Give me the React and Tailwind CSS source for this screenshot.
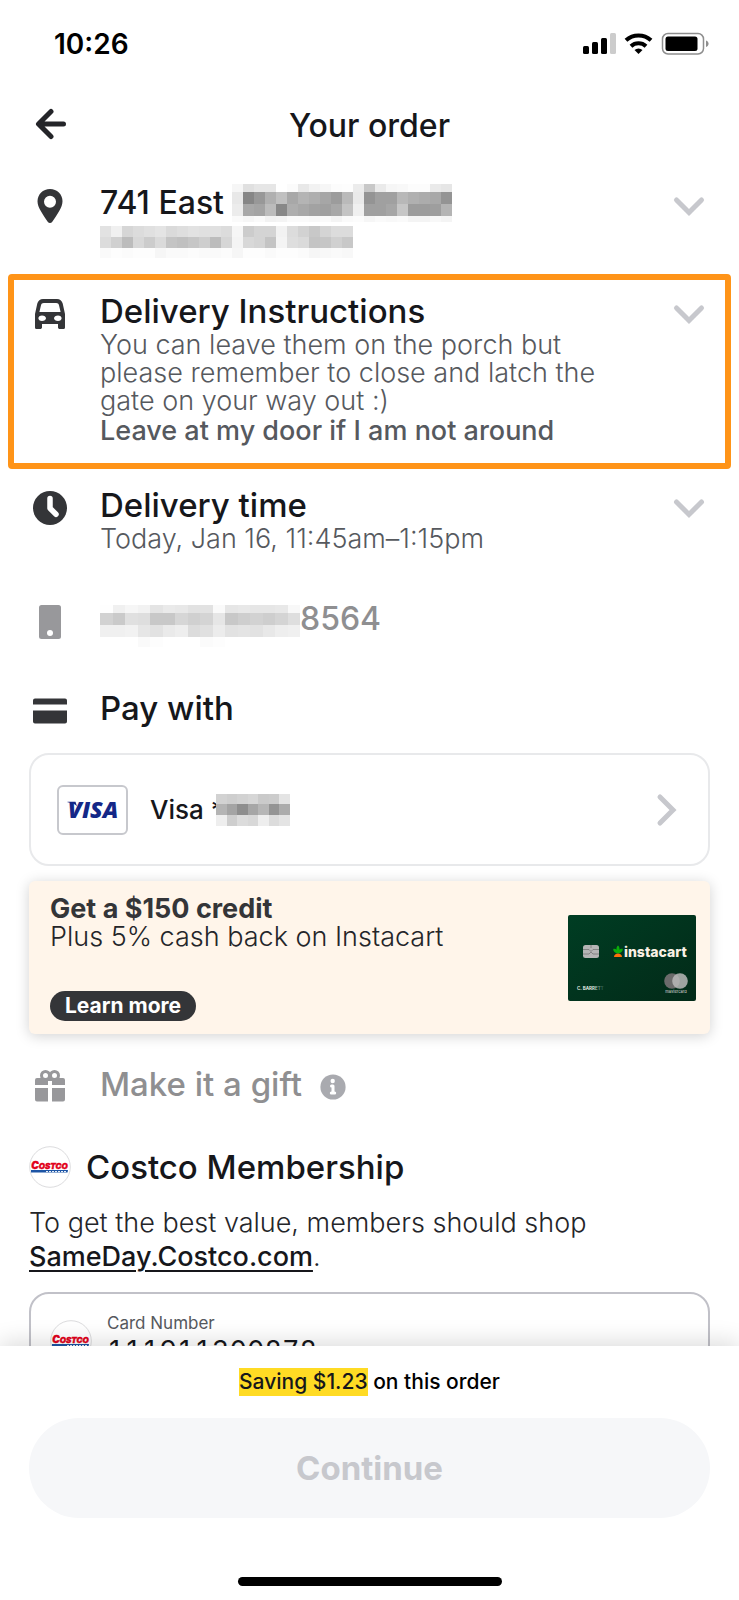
import React from "react";

// Grey levels of the masked out texts, one string per row, two hex digits per cell
const MASKS = {
  street: {
    cell: 11,
    rows: [
      [8, "f6 e0 e6 e6 ff fb e8 f2 f6 fc fd ec c8 ea f6 f8 fc fc ea e6"],
      [12, "e8 86 98 b0 c0 a8 b4 ae a6 9c ba ea 94 a0 a0 b8 b0 ac a8 94"],
      [12, "ec a8 a4 bc 88 ae a8 a2 a0 a8 c4 f0 a0 a0 a6 c6 9c 9c 9e b4"],
      [6, "fa f6 fa f2 f4 fa fa f8 fa f4 fa fc f6 fa f8 fa f4 f4 f8 f4"],
    ],
  },
  city: {
    cell: 11,
    rows: [
      [11, "e2 f0 d6 dc e0 e4 da de e2 e0 e0 dc f6 cc d4 d4 f2 dc d2 c8 d4 dc dc"],
      [11, "dc d0 bc d8 cc da c4 c0 c6 ce bc d6 f4 d8 d4 c4 f4 de da c4 c6 d0 c8"],
      [10, "fa fd fb fd fd f6 fa fa fc fa fa fc f6 fd fd fa fd fd fb f6 f8 fa f8"],
    ],
  },
  phone: {
    cell: 12.5,
    rows: [
      [8, "fe f0 f6 f2 e4 ea e8 e2 e2 fa e6 e8 e6 e6 e8 f8"],
      [12, "d2 ca e0 de c8 c8 d6 d0 d4 e6 c8 ce d2 ce d4 de"],
      [12, "f0 f0 f2 e6 e2 ea ee dc e0 ec e2 e4 e2 e8 ee f0"],
      [10, "ff ff ff fa fd ff ff ff fb fd ff ff ff ff ff ff"],
    ],
  },
  card: {
    cell: 10.5,
    rows: [
      [10, "d2 ce d2 d6 ca cc e4"],
      [11, "b4 a4 8e a6 b6 94 ac"],
      [11, "ee ce dc d8 ee dc e4"],
    ],
  },
};

const Mask = ({ name }) => {
  const { cell, rows } = MASKS[name];
  const height = rows.reduce((sum, [h]) => sum + h, 0);
  const width = rows[0][1].split(" ").length * cell;
  let y = 0;

  return (
    <svg
      width={width}
      height={height}
      shapeRendering="crispEdges"
      className="shrink-0"
      aria-hidden="true"
    >
      {rows.map(([h, values]) => {
        const top = y;
        y += h;
        return values
          .split(" ")
          .map((v, i) => (
            <rect
              key={`${top}-${i}`}
              x={i * cell}
              y={top}
              width={cell}
              height={h}
              fill={`#${v}${v}${v}`}
            />
          ));
      })}
    </svg>
  );
};

const PinIcon = () => (
  <svg width="36" height="36" viewBox="0 0 36 36" fill="#343538">
    <path
      fillRule="evenodd"
      d="M18 1C11 1 5.500 6.400 5.500 13.300c0 3.200 1.300 6.200 3 9.200 2.300 4.200 5 8.200 7.200 11.200 1.200 1.700 3.400 1.700 4.600 0 2.200-3 4.900-7 7.200-11.200 1.700-3 3-6 3-9.200C30.500 6.400 25 1 18 1Zm0 18.800a6 6 0 1 0 0-12 6 6 0 0 0 0 12Z"
    />
  </svg>
);

const CarIcon = () => (
  <svg width="36" height="36" viewBox="0 0 36 36" fill="#343538">
    <path
      fillRule="evenodd"
      d="M11 3h14c2.800 0 5 1.800 5.700 4.500L33 18v13.500c0 1-.8 1.500-1.800 1.500h-3.400c-1 0-1.800-.6-1.800-1.500V28H10v3.500c0 .9-.8 1.500-1.800 1.500H4.800C3.800 33 3 32.500 3 31.500V18L5.300 7.500C6 4.800 8.200 3 11 3Zm.8 4c-1.500 0-2.500.8-2.800 2.200L7.400 16h21.200L27 9.200C26.700 7.800 25.700 7 24.200 7H11.800ZM10 25c2.200 0 4-1.200 4-2.700S12.200 19.600 10 19.600s-3.600 1.200-3.600 2.700S7.800 25 10 25Zm16 0c2.200 0 3.600-1.200 3.600-2.700s-1.400-2.700-3.600-2.700-4 1.200-4 2.700 1.800 2.700 4 2.700Z"
    />
  </svg>
);

const ClockIcon = () => (
  <svg width="36" height="36" viewBox="0 0 36 36">
    <circle cx="18" cy="18" r="17" fill="#343538" />
    <path
      d="M18 8.500v9.800l6 6"
      fill="none"
      stroke="#fff"
      strokeWidth="5.500"
      strokeLinecap="round"
      strokeLinejoin="round"
    />
  </svg>
);

const PhoneIcon = () => (
  <svg width="36" height="36" viewBox="0 0 36 36">
    <rect x="7" y="1" width="22" height="34" rx="2.500" fill="#98989b" />
    <circle cx="18" cy="29" r="3" fill="#fff" />
  </svg>
);

const CardIcon = () => (
  <svg width="36" height="36" viewBox="0 0 36 36" fill="#343538">
    <path d="M3 5.500h30a2 2 0 0 1 2 2v4H1v-4a2 2 0 0 1 2-2ZM1 17.500h34V28.500a2 2 0 0 1-2 2H3a2 2 0 0 1-2-2Z" />
  </svg>
);

const GiftIcon = () => (
  <svg width="36" height="36" viewBox="0 0 36 36" fill="#98989b">
    <g fill="none" stroke="#98989b" strokeWidth="3">
      <circle cx="13.500" cy="6.500" r="4" />
      <circle cx="22.500" cy="6.500" r="4" />
    </g>
    <path d="M5 9h26a2 2 0 0 1 2 2v5H20v-4h-4v4H3v-5a2 2 0 0 1 2-2ZM3 19h13v13.500H5a2 2 0 0 1-2-2ZM20 19h13v11.500a2 2 0 0 1-2 2H20Z" />
  </svg>
);

const InfoIcon = () => (
  <svg width="26" height="26" viewBox="0 0 26 26">
    <circle cx="13" cy="13" r="12.600" fill="#a9aaaf" />
    <circle cx="12.700" cy="7" r="2.200" fill="#fff" />
    <path
      d="M11.500 12h1.500v6.500M11.300 19h3.400"
      fill="none"
      stroke="#fff"
      strokeWidth="3"
      strokeLinecap="round"
      strokeLinejoin="round"
    />
  </svg>
);

const ChevronDown = () => (
  <svg width="42" height="36" viewBox="0 0 42 36" fill="none">
    <path
      d="m8.500 12 12.500 12.500L33.500 12"
      stroke="#c7c8cd"
      strokeWidth="5"
      strokeLinecap="round"
    />
  </svg>
);

const CostcoLogo = () => (
  <svg
    width="42"
    height="42"
    viewBox="0 0 42 42"
    className="shrink-0"
    aria-hidden="true"
  >
    <circle cx="21" cy="21" r="20.300" fill="#fff" stroke="#dcdcde" />
    <text
      x="20.500"
      y="22.500"
      textAnchor="middle"
      fontFamily="Inter, sans-serif"
      fontWeight="900"
      fontStyle="italic"
      fontSize="8"
      fill="#e2001a"
      stroke="#e2001a"
      strokeWidth="0.400"
    >
      <tspan fontSize="10">C</tspan>OSTCO
    </text>
    <path d="M2 24h37l-.5 2.400H2Z" fill="#1d55a5" />
    <path d="M17 25.600h21" stroke="#fff" strokeWidth="1" strokeDasharray="2 1" />
  </svg>
);

const InstacartCard = () => (
  <svg
    width="128"
    height="86"
    viewBox="0 0 128 86"
    className="shrink-0"
    aria-hidden="true"
  >
    <defs>
      <linearGradient id="cardGreen" x1="0" y1="0" x2="1" y2="1">
        <stop offset="0" stopColor="#003d23" />
        <stop offset="1" stopColor="#022a18" />
      </linearGradient>
      <linearGradient id="nameFade" x1="0" y1="0" x2="1" y2="0">
        <stop offset="0.600" stopColor="#e8efe9" />
        <stop offset="1" stopColor="#1c4a34" />
      </linearGradient>
    </defs>
    <rect width="128" height="86" rx="2" fill="url(#cardGreen)" />
    <rect x="15" y="30" width="16" height="13" rx="2.500" fill="#b5b5b5" />
    <path
      d="M15 34.500h6l2 2 2-2h6M15 39h6l2-2 2 2h6M23 30v3"
      fill="none"
      stroke="#777"
      strokeWidth="0.800"
    />
    <path
      d="M50 38.500c-3-.2-4.800-2-4.800-4.500 1.500-.4 2.600 0 3.300.7-.2-1.800.3-3.200 1.500-4.200 1.200 1 1.700 2.400 1.500 4.200.7-.7 1.800-1.100 3.300-.7 0 2.500-1.800 4.300-4.800 4.500Z"
      fill="#0aad0a"
    />
    <path d="M46 42c0-2 1.800-3.500 4-3.500s4 1.500 4 3.500Z" fill="#ff7009" />
    <text
      x="56"
      y="42"
      fontFamily="Inter, sans-serif"
      fontWeight="800"
      fontSize="14"
      fill="#faf1e5"
    >
      instacart
    </text>
    <text
      x="9"
      y="75"
      fontFamily="Inter, sans-serif"
      fontWeight="700"
      fontSize="4.500"
      fill="url(#nameFade)"
    >
      C. BARRETT
    </text>
    <circle cx="104" cy="66" r="7.800" fill="#6b6b6b" />
    <circle cx="112" cy="66" r="7.800" fill="#b9b9b9" fillOpacity="0.850" />
    <text
      x="108"
      y="77.500"
      textAnchor="middle"
      fontFamily="Inter, sans-serif"
      fontSize="4"
      fill="#dcdcdc"
    >
      mastercard
    </text>
  </svg>
);

const StatusBar = () => (
  <div className="flex items-center justify-between pt-[27px] pl-[54px] pr-[30px] text-black">
    <span className="text-[28px] leading-[34px] font-semibold">10:26</span>
    <svg width="126" height="24" viewBox="0 0 126 24" aria-hidden="true">
      <rect x="0" y="14" width="6" height="8" rx="1.500" />
      <rect x="9" y="10" width="6" height="12" rx="1.500" />
      <rect x="18" y="6" width="6" height="16" rx="1.500" />
      <rect x="27" y="1" width="6" height="21" rx="1.500" fill="#cccccc" />
      <g fill="none" stroke="#000" strokeWidth="4">
        <path d="M43 8.300a18.500 18.500 0 0 1 25 0" />
        <path d="M48 14.200a11 11 0 0 1 15 0" />
      </g>
      <path d="m55.500 22-4-4a6 6 0 0 1 8 0Z" />
      <rect
        x="79.500"
        y="1.500"
        width="41"
        height="20.500"
        rx="5.500"
        fill="none"
        stroke="#8e8e8e"
        strokeWidth="1.500"
      />
      <rect x="82.500" y="4.500" width="32" height="14.500" rx="2.500" />
      <path d="M123 8.500c1.500.6 2.600 1.700 2.600 3.300s-1.100 2.700-2.600 3.300Z" fill="#8e8e8e" />
    </svg>
  </div>
);

const Row = ({ icon, expandLabel, children }) => (
  <div className="flex items-start">
    <span className="w-[42px] flex justify-center shrink-0 mt-[3px] mr-[29px]">
      {icon}
    </span>
    <div className="flex-1 min-w-0">{children}</div>
    {expandLabel && (
      <button type="button" aria-label={expandLabel} className="shrink-0 mt-[3px]">
        <ChevronDown />
      </button>
    )}
  </div>
);

const App = () => {
  return (
    <div className="h-screen flex flex-col bg-white font-['Inter',sans-serif] text-[#16171b] overflow-hidden">
      <main className="flex-1 min-h-0 overflow-hidden">
        <StatusBar />

        <header className="mt-[47px] px-[29px] h-9 grid grid-cols-[42px_1fr_42px] items-center">
          <button type="button" aria-label="Back">
            <svg width="42" height="36" viewBox="0 0 42 36" fill="none">
              <path
                d="M34.500 16H10M22 3.500 9.500 16 22 28.500"
                stroke="#242529"
                strokeWidth="5"
                strokeLinecap="round"
                strokeLinejoin="round"
              />
            </svg>
          </button>
          <h1 className="text-center text-[32px] leading-9 font-medium">
            Your order
          </h1>
        </header>

        {/* Address */}
        <section className="mt-[41px] px-[29px]">
          <Row icon={<PinIcon />} expandLabel="Change address">
            <h2 className="h-9 text-[32px] leading-9 font-medium flex items-center gap-2">
              741 East <Mask name="street" />
            </h2>
            <div className="mt-[5px]">
              <Mask name="city" />
            </div>
          </Row>
        </section>

        {/* Delivery instructions */}
        <section className="mt-4 mx-2 px-[15px] pt-[13px] pb-[18px] border-[6px] border-[#ff9418] rounded-[4px]">
          <Row icon={<CarIcon />} expandLabel="Edit delivery instructions">
            <h2 className="text-[33px] leading-9 font-medium">
              Delivery Instructions
            </h2>
            <p className="mt-0.5 pr-10 text-[27px] leading-7 font-light text-[#56595e]">
              You can leave them on the porch but please remember to close and
              latch the gate on your way out :)
            </p>
            <p className="mt-0.5 text-[27px] leading-7 font-medium text-[#56595e]">
              Leave at my door if I am not around
            </p>
          </Row>
        </section>

        <div className="px-[29px]">
          {/* Delivery time */}
          <section className="mt-[18px]">
            <Row icon={<ClockIcon />} expandLabel="Change delivery time">
              <h2 className="text-[33px] leading-9 font-medium">
                Delivery time
              </h2>
              <p className="mt-0.5 text-[27px] leading-7 font-light text-[#56595e]">
                Today, Jan 16, 11:45am–1:15pm
              </p>
            </Row>
          </section>

          {/* Phone */}
          <section className="mt-12">
            <Row icon={<PhoneIcon />}>
              <p className="h-9 flex items-start text-[32px] leading-9 font-medium text-[#8f8f91]">
                <span className="mt-1 shrink-0">
                  <Mask name="phone" />
                </span>
                8564
              </p>
            </Row>
          </section>

          {/* Payment */}
          <section className="mt-[50px]">
            <Row icon={<CardIcon />}>
              <h2 className="text-[33px] leading-9 font-medium">Pay with</h2>
            </Row>
            <button
              type="button"
              className="mt-6 w-full h-[113px] px-[26px] flex items-center rounded-[20px] border-2 border-[#e8e9eb] text-left"
            >
              <span className="w-[71px] h-[50px] flex items-center justify-center rounded-[6px] border-2 border-[#c7c8cd]">
                <svg width="60" height="34" viewBox="0 0 60 34" aria-hidden="true">
                  <text
                    x="30"
                    y="25"
                    textAnchor="middle"
                    fontFamily="Open Sans, sans-serif"
                    fontWeight="800"
                    fontStyle="italic"
                    fontSize="23"
                    fill="#142787"
                  >
                    VISA
                  </text>
                  <path d="M4.500 8.700h8l1.500 4.500c-2-2.200-5.500-3.600-9.500-4Z" fill="#142787" />
                </svg>
              </span>
              <span className="ml-[22px] text-[26px] leading-8 font-medium">
                Visa *
              </span>
              <span className="relative -ml-2">
                <Mask name="card" />
              </span>
              <svg
                width="32"
                height="36"
                viewBox="0 0 32 36"
                fill="none"
                className="ml-auto"
                aria-hidden="true"
              >
                <path
                  d="m10 5 13 13-13 13"
                  stroke="#c7c8cd"
                  strokeWidth="5"
                  strokeLinecap="round"
                />
              </svg>
            </button>
          </section>

          {/* Credit card offer */}
          <section className="mt-[15px] h-[153px] pl-[21px] pr-[14px] flex items-center justify-between bg-[#fff5ea] rounded-[6px] shadow-[0_2px_14px_rgba(0,0,0,0.18)]">
            <div>
              <h3 className="text-[27px] leading-7 font-bold text-[#343538]">
                Get a $150 credit
              </h3>
              <p className="text-[27px] leading-7 font-light text-[#242529]">
                Plus 5% cash back on Instacart
              </p>
              <button
                type="button"
                className="mt-10 h-[30px] px-[15px] flex items-center rounded-full bg-[#343538] text-white text-[21px] leading-[30px] font-bold"
              >
                Learn more
              </button>
            </div>
            <InstacartCard />
          </section>

          {/* Gift */}
          <section className="mt-8 text-[#8f8f91]">
            <Row icon={<GiftIcon />}>
              <div className="flex items-start">
                <h2 className="text-[33px] leading-9 font-medium">
                  Make it a gift
                </h2>
                <button
                  type="button"
                  aria-label="About gifts"
                  className="ml-[18px] mt-2"
                >
                  <InfoIcon />
                </button>
              </div>
            </Row>
          </section>

          {/* Membership */}
          <section className="mt-[41px]">
            <div className="flex items-center gap-[15px]">
              <CostcoLogo />
              <h2 className="text-[33px] leading-9 font-medium">
                Costco Membership
              </h2>
            </div>
            <p className="mt-[18px] text-[27px] leading-[34px] font-light text-[#242529]">
              To get the best value, members should shop{" "}
              <a
                href="#sameday"
                className="font-medium text-[#16171b] underline decoration-2 underline-offset-4"
              >
                SameDay.Costco.com
              </a>
              .
            </p>
            <div className="mt-[18px] h-[113px] px-[19px] flex items-start rounded-[20px] border-2 border-[#c1c1c8]">
              <span className="mt-[26px] mr-[15px]">
                <CostcoLogo />
              </span>
              <div className="flex-1 pt-[17px]">
                <label
                  htmlFor="card-number"
                  className="block text-[17px] leading-6 text-[#56595e]"
                >
                  Card Number
                </label>
                <input
                  id="card-number"
                  type="text"
                  defaultValue="111911300878"
                  className="block w-full text-[27px] leading-8 tabular-nums outline-none"
                />
              </div>
            </div>
          </section>
        </div>
      </main>

      <footer className="relative shrink-0 px-[29px] pt-[22px] pb-[14px] bg-white shadow-[0_-4px_22px_rgba(0,0,0,0.14)]">
        <p className="text-center text-[21px] leading-7 font-medium text-black">
          <mark className="inline-block bg-[#ffdb24] text-[#16171b]">
            Saving $1.23
          </mark>{" "}
          on this order
        </p>
        <button
          type="button"
          disabled
          className="mt-[22px] w-full h-[100px] rounded-full bg-[#f6f7f9] text-[#c7c8cd] text-[33px] leading-10 font-bold"
        >
          Continue
        </button>
        <div className="mt-[59px] mx-auto w-[264px] h-[9px] rounded-full bg-black"></div>
      </footer>
    </div>
  );
};

export default App;
